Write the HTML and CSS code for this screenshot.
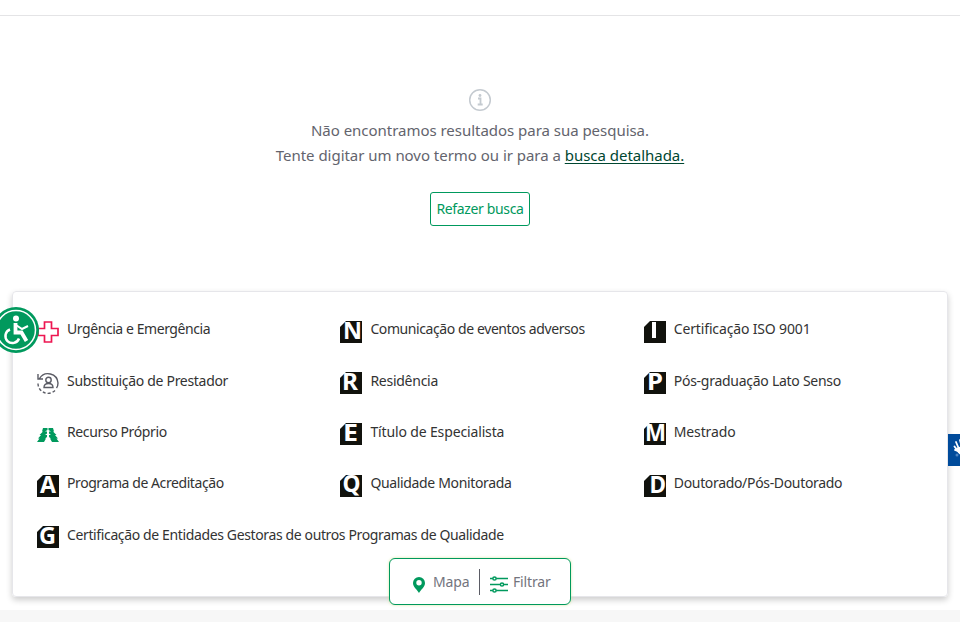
FILE: index.html
```html
<!DOCTYPE html>
<html lang="pt-BR">
<head>
<meta charset="utf-8">
<title>Busca</title>
<link rel="stylesheet" href="styles.css">
</head>
<body>
<svg width="0" height="0" class="defs"><defs>
<path id="tag" d="M0 6 6 0H22V22H0Z"/>
</defs></svg>
<header class="top"></header>
<main>
<section class="empty">
<svg class="info" width="24" height="24" viewBox="0 0 24 24" fill="none" stroke="#c4cad0"><circle cx="12" cy="12" r="10.3" stroke-width="1.5"/><path d="M10 10.5h2.5v6M9.700 16.500h5" stroke-width="1.800"/><circle cx="12" cy="7.500" r="1.400" fill="#c4cad0" stroke="none"/></svg>
<p class="m1">Não encontramos resultados para sua pesquisa.</p>
<p class="m2">Tente digitar um novo termo ou ir para a <a>busca detalhada.</a></p>
<button class="redo">Refazer busca</button>
</section>
<section class="card">
<div class="item"><svg viewBox="0 0 22 22" fill="none" stroke="#ed1651" stroke-width="1.700"><path d="M7.500 1h7v6.500H21v7h-6.500V21h-7v-6.500H1v-7h6.500Z"/></svg><span class="t1">Urgência e Emergência</span></div>
<div class="item"><svg class="letter" viewBox="0 0 22 22"><use href="#tag"/><text x="3" y="17.500" textLength="19" lengthAdjust="spacingAndGlyphs">N</text></svg><span class="t2">Comunicação de eventos adversos</span></div>
<div class="item"><svg class="letter" viewBox="0 0 22 22"><use href="#tag"/><path d="M8 1H12V17H8Z" fill="#fff"/></svg><span class="t3">Certificação ISO 9001</span></div>
<div class="item"><svg viewBox="0 0 22 22" fill="none" stroke="#5b5c65" stroke-width="1.400"><path d="M2.500 6.500A10 10 0 0 1 21 11q0 3-1.500 5M1 2v5h5"/><path d="M18 18.500A10 10 0 0 1 1 11" stroke-dasharray="3 2"/><circle cx="11.500" cy="8" r="2.700"/><path d="M7 15.500c0-3 1.500-4 4.500-4s4.500 1 4.500 4Z"/></svg><span class="t4">Substituição de Prestador</span></div>
<div class="item"><svg class="letter" viewBox="0 0 22 22"><use href="#tag"/><text x="2" y="17.500" textLength="16" lengthAdjust="spacingAndGlyphs">R</text></svg><span class="t5">Residência</span></div>
<div class="item"><svg class="letter" viewBox="0 0 22 22"><use href="#tag"/><text x="3" y="17.500" textLength="16" lengthAdjust="spacingAndGlyphs">P</text></svg><span class="t6">Pós-graduação Lato Senso</span></div>
<div class="item"><svg viewBox="0 0 22 22" fill="#00995d"><path d="M6 5h4.500v2L8 8.500h2v2L8 12h2v2l-2 1.500h1L7 19H0l2.500-3.500H1L4 12H2.500L6 8.500H5ZM11.500 5H16l1 3.500h-1l3.500 3.500H18l3 3.500h-1.500L22 19h-7l-2-3.500h1L12 14v-2h2l-2-1.500v-2h2L11.500 7Z"/></svg><span class="t7">Recurso Próprio</span></div>
<div class="item"><svg class="letter" viewBox="0 0 22 22"><use href="#tag"/><text x="3" y="17.500" textLength="15" lengthAdjust="spacingAndGlyphs">E</text></svg><span class="t8">Título de Especialista</span></div>
<div class="item"><svg class="letter" viewBox="0 0 22 22"><use href="#tag"/><text x="1" y="17.500" textLength="21" lengthAdjust="spacingAndGlyphs">M</text></svg><span class="t9">Mestrado</span></div>
<div class="item"><svg class="letter" viewBox="0 0 22 22"><use href="#tag"/><text x="3" y="17.500">A</text></svg><span class="t10">Programa de Acreditação</span></div>
<div class="item"><svg class="letter" viewBox="0 0 22 22"><use href="#tag"/><text x="2.500" y="17" textLength="18" lengthAdjust="spacingAndGlyphs">Q</text></svg><span class="t11">Qualidade Monitorada</span></div>
<div class="item"><svg class="letter" viewBox="0 0 22 22"><use href="#tag"/><text x="5.500" y="17.500" textLength="16.500" lengthAdjust="spacingAndGlyphs">D</text></svg><span class="t12">Doutorado/Pós-Doutorado</span></div>
<div class="item wide"><svg class="letter" viewBox="0 0 22 22"><use href="#tag"/><text x="2" y="17.500" textLength="17" lengthAdjust="spacingAndGlyphs">G</text></svg><span class="t13">Certificação de Entidades Gestoras de outros Programas de Qualidade</span></div>
</section>
</main>
<footer></footer>
<nav class="tools">
<div class="map"><svg width="12" height="16" viewBox="0 0 12 16"><path fill="#00995d" fill-rule="evenodd" d="M6 0A6 6 0 0 0 0 6c0 4 4 6.500 6 10 2-3.500 6-6 6-10A6 6 0 0 0 6 0Zm0 3a2.700 2.700 0 1 1 0 5.400A2.700 2.700 0 0 1 6 3Z"/></svg><span>Mapa</span></div>
<div class="filter"><svg width="18" height="17" viewBox="0 0 18 17" fill="#fff" stroke="#00995d" stroke-width="1.500"><path d="M0 2.500h18M0 8.500h18M0 14.500h18"/><circle cx="4.500" cy="2.500" r="1.600"/><circle cx="12" cy="8.500" r="1.600"/><circle cx="4.500" cy="14.500" r="1.600"/></svg><span>Filtrar</span></div>
</nav>
<svg class="access" width="46" height="46" viewBox="0 0 46 46" fill="none" stroke="#fff"><circle cx="23" cy="23" r="23" fill="#00995d" stroke="none"/><circle cx="23" cy="23" r="19.500" stroke-width="1.500"/><circle cx="23" cy="11.500" r="3" fill="#fff" stroke="none"/><path d="M22.500 16v9.500h6l5 8.500" stroke-width="3.800"/><path d="M23 18l6 4 6-3" stroke-width="2"/><path d="M17 22.500a7 7 0 1 0 9 9" stroke-width="2.500"/></svg>
<div class="libras"><svg width="32" height="32" viewBox="0 0 32 32"><path d="M9 16 6.500 12.500M11 15 8 8M14 14 12 6M12 18 7 16" stroke="#fff" stroke-width="1.800" stroke-linecap="round"/><path d="M8 14l6-2v9q-4 0-6-7Z" fill="#fff"/><circle cx="9" cy="21" r="1.500" fill="#4f86c4"/></svg></div>
</body>
</html>
```
FILE: styles.css
```css
* { box-sizing: border-box; }
body { margin: 0; height: 622px; overflow: hidden; position: relative; background: #fff; font-family: "Noto Sans", sans-serif; font-size: 14px; color: #333; }
.defs { position: absolute; }
.top { height: 16px; border-bottom: 1px solid #e4e4e6; }
main { height: 594px; padding: 72px 12px 0; }
.empty { height: 203px; display: flex; flex-direction: column; align-items: center; color: #63646d; }
.info { flex: none; }
p { margin: 0; height: 25px; line-height: 25px; font-size: 15px; letter-spacing: -.03px; white-space: nowrap; }
.m1 { margin-top: 6px; }
p a { color: #004731; text-decoration: underline; text-underline-offset: 2px; }
.redo { margin-top: 24px; width: 100px; height: 34px; padding: 0 0 2px; border: 1px solid #00995d; border-radius: 3px; background: #fff; color: #00995d; font: 14px "Noto Sans", sans-serif; letter-spacing: -.36px; white-space: nowrap; }
.card { height: 306px; padding: 13px 0 0 24px; border: 1px solid #e6e6ea; border-radius: 4px; box-shadow: 0 3px 6px rgba(0,0,0,.2); display: grid; grid-template-columns: 303.4px 303.4px 1fr; grid-template-rows: repeat(5, 51.4px); }
.item { display: flex; align-items: center; white-space: nowrap; gap: 8px; }
.item svg { width: 22px; height: 22px; flex: none; overflow: visible; position: relative; top: 1px; }
.item span { line-height: 20px; margin-top: -3px; }
.t1 { letter-spacing: -.43px; }
.t2 { letter-spacing: -.41px; }
.t3 { letter-spacing: -.15px; }
.t4 { letter-spacing: -.31px; }
.t5 { letter-spacing: -.26px; }
.t6 { letter-spacing: -.27px; }
.t7 { letter-spacing: -.38px; }
.t8 { letter-spacing: -.14px; }
.t9 { letter-spacing: -.13px; }
.t10 { letter-spacing: -.42px; }
.t11 { letter-spacing: -.35px; }
.t12 { letter-spacing: -.33px; }
.t13 { letter-spacing: -.37px; }
.wide { grid-column: span 3; }
.letter { fill: #11120d; }
.letter text { fill: #fff; font: bold 23px "Noto Sans", sans-serif; }
footer { height: 12px; background: #f7f7f7; }
.tools { position: absolute; left: 389px; top: 558px; width: 182px; height: 47px; border: 1px solid #00995d; border-radius: 6px; background: #fff; box-shadow: 0 0 3px #d5e6a0; display: flex; align-items: center; color: #73747d; letter-spacing: -.15px; }
.map, .filter { display: flex; align-items: center; height: 26px; }
.map { width: 90px; padding-left: 23px; gap: 8px; border-right: 1px solid #5b5c65; }
.filter { padding-left: 10px; gap: 5px; }
.tools svg { position: relative; top: 3px; flex: none; }
.access { position: absolute; left: -7px; top: 307px; }
.libras { position: absolute; left: 948px; top: 434px; width: 12px; height: 32px; overflow: hidden; background: #004b9b; }
```
